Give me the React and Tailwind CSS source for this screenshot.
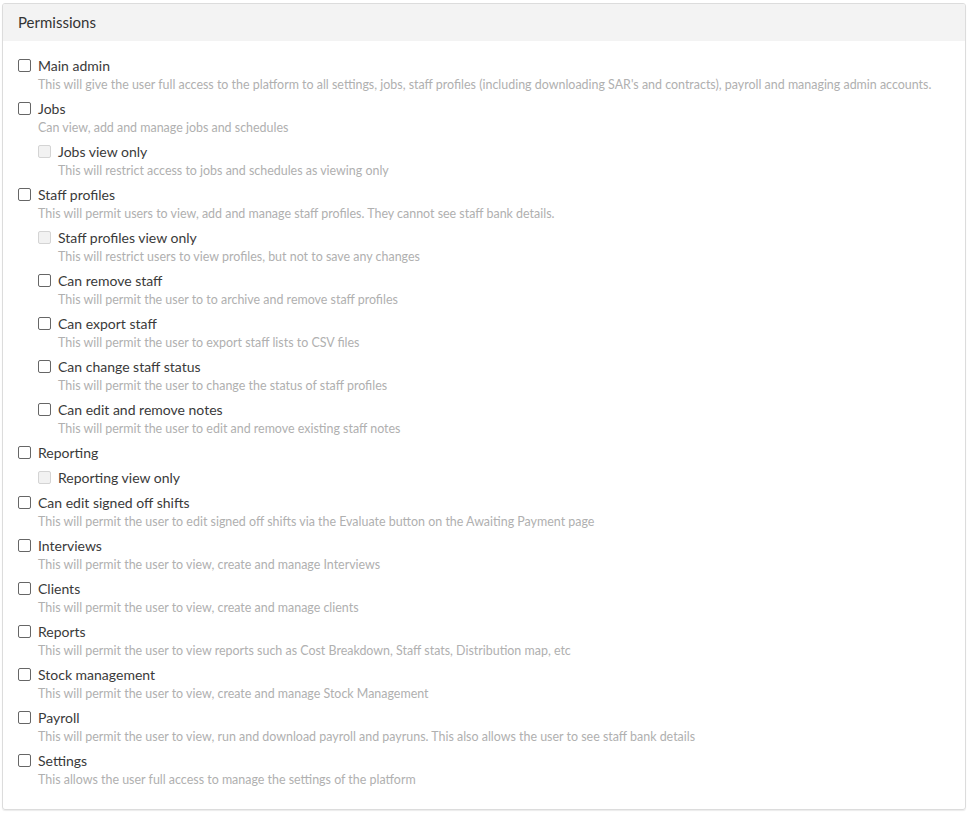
import React from "react";

const items = [
  { label: "Main admin", desc: "This will give the user full access to the platform to all settings, jobs, staff profiles (including downloading SAR's and contracts), payroll and managing admin accounts." },
  { label: "Jobs", desc: "Can view, add and manage jobs and schedules", children: [
    { label: "Jobs view only", desc: "This will restrict access to jobs and schedules as viewing only", disabled: true },
  ] },
  { label: "Staff profiles", desc: "This will permit users to view, add and manage staff profiles. They cannot see staff bank details.", children: [
    { label: "Staff profiles view only", desc: "This will restrict users to view profiles, but not to save any changes", disabled: true },
    { label: "Can remove staff", desc: "This will permit the user to to archive and remove staff profiles" },
    { label: "Can export staff", desc: "This will permit the user to export staff lists to CSV files" },
    { label: "Can change staff status", desc: "This will permit the user to change the status of staff profiles" },
    { label: "Can edit and remove notes", desc: "This will permit the user to edit and remove existing staff notes" },
  ] },
  { label: "Reporting", children: [
    { label: "Reporting view only", disabled: true },
  ] },
  { label: "Can edit signed off shifts", desc: "This will permit the user to edit signed off shifts via the Evaluate button on the Awaiting Payment page" },
  { label: "Interviews", desc: "This will permit the user to view, create and manage Interviews" },
  { label: "Clients", desc: "This will permit the user to view, create and manage clients" },
  { label: "Reports", desc: "This will permit the user to view reports such as Cost Breakdown, Staff stats, Distribution map, etc" },
  { label: "Stock management", desc: "This will permit the user to view, create and manage Stock Management" },
  { label: "Payroll", desc: "This will permit the user to view, run and download payroll and payruns. This also allows the user to see staff bank details" },
  { label: "Settings", desc: "This allows the user full access to manage the settings of the platform" },
];

function Box({ disabled }) {
  return (
    <span
      className={
        disabled
          ? "mt-[2px] h-[13px] w-[13px] shrink-0 rounded-[2px] border border-[#d4d4d4] bg-[#f2f2f2]"
          : "mt-[2px] h-[13px] w-[13px] shrink-0 rounded-[2px] border border-[#666] bg-white"
      }
    />
  );
}

function Item({ item }) {
  return (
    <div className={item.desc ? "mb-[6px]" : "mb-[7px]"}>
      <div className="flex gap-[7px]">
        <Box disabled={item.disabled} />
        <div>
          <div className="text-[14px] leading-[18px] text-[#3a3a3a]">{item.label}</div>
          {item.desc && (
            <div className="pt-[1px] text-[12.45px] leading-[18px] text-[#b0b0b0]">{item.desc}</div>
          )}
        </div>
      </div>
      {item.children && (
        <div className={item.desc ? "mt-[6px] pl-[20px]" : "mt-[7px] pl-[20px]"}>
          {item.children.map((c, i) => (
            <Item key={i} item={c} />
          ))}
        </div>
      )}
    </div>
  );
}

export default function App() {
  return (
    <div className="bg-white pl-[2px] pr-[4px] pt-[3px] pb-[5px]" style={{ fontFamily: "Lato, 'Open Sans', sans-serif" }}>
      <div className="overflow-hidden rounded-[3px] border border-[#dcdcdc] shadow-[0_1px_1px_rgba(0,0,0,0.08)]">
        <div className="h-[37px] bg-[#f3f3f3] pl-[15px] text-[15px] leading-[37px] text-[#333]">Permissions</div>
        <div className="pl-[15px] pr-[15px] pt-[16px] pb-[14px]">
          {items.map((it, i) => (
            <Item key={i} item={it} />
          ))}
        </div>
      </div>
    </div>
  );
}
